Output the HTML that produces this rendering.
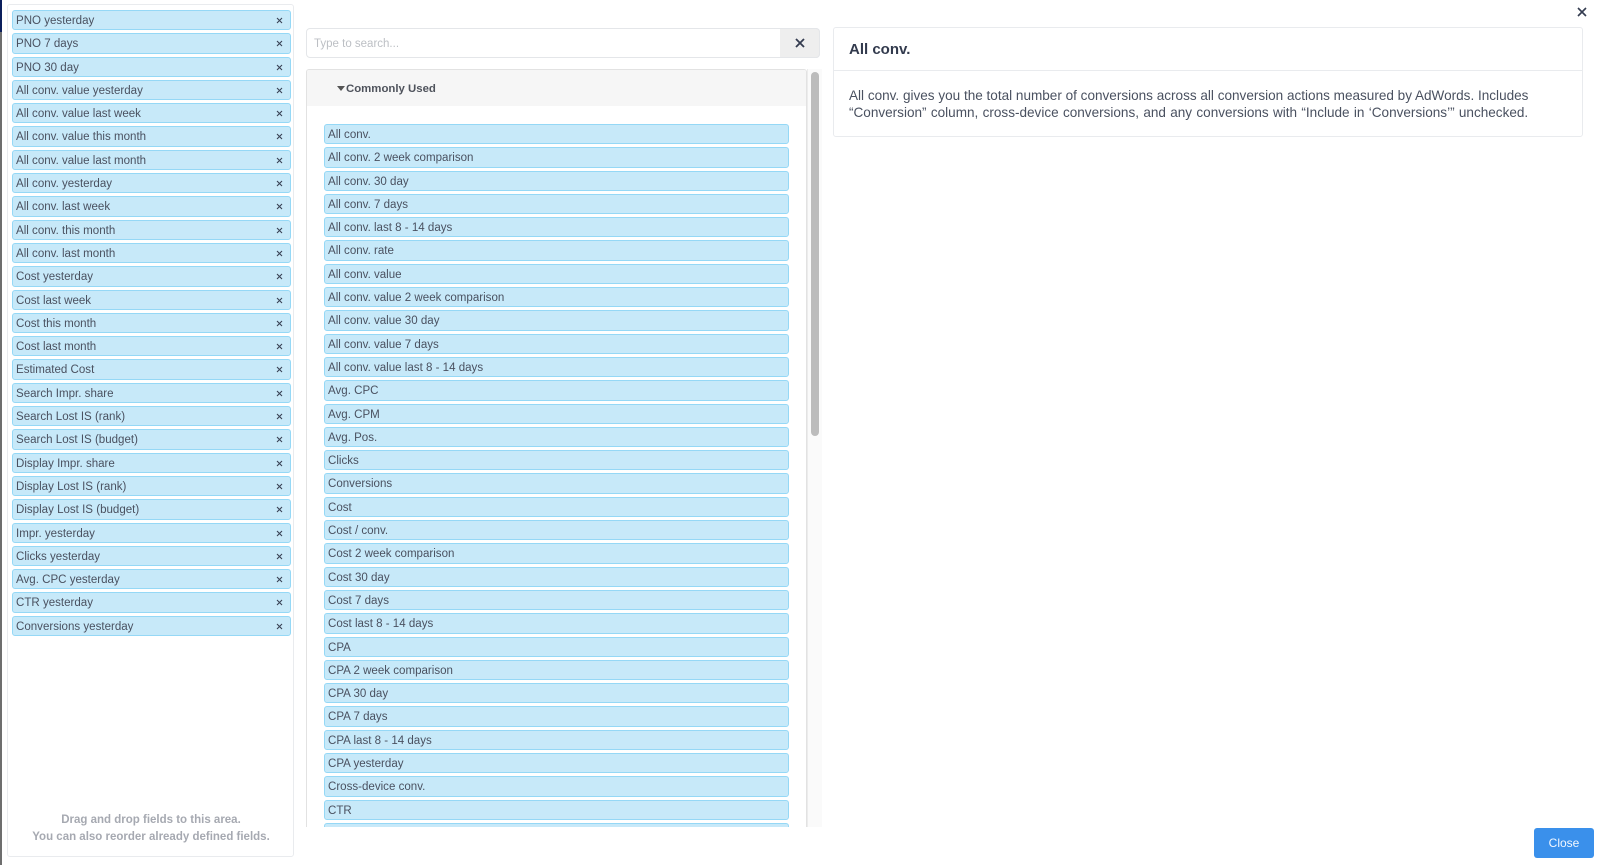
<!DOCTYPE html>
<html><head><meta charset="utf-8"><style>
html,body{margin:0;padding:0;width:1600px;height:865px;overflow:hidden;background:#fff;font-family:"Liberation Sans",sans-serif;color:#4a5160}
#w{position:absolute;left:0;top:0;width:1600px;height:865px;filter:blur(.3px)}
.a{position:absolute;box-sizing:border-box}
.t{height:20.3px;margin-bottom:3px;background:#c7e9f9;border:1px solid #95d8f6;border-radius:3px;font-size:11.55px;line-height:20.5px;padding-left:3px;white-space:nowrap;position:relative;box-sizing:border-box}
.t svg{position:absolute;right:7px;top:6px}
</style></head><body><div id="w">
<div class="a" style="left:0;top:0;width:2px;height:32px;background:#0b1f5c"></div>
<div class="a" style="left:0;top:32px;width:2px;height:833px;background:#6e6e6e"></div>

<div class="a" style="left:7px;top:4px;width:287px;height:853px;border:1px solid #e9ebee;border-radius:3px"></div>
<div class="a" style="left:12px;top:10px;width:279px" id="L">
<div class="t">PNO yesterday<svg width="7" height="7" viewBox="0 0 7 7"><path d="M1 1L6 6M6 1L1 6" stroke="#3a4256" stroke-width="1.1"/></svg></div>
<div class="t">PNO 7 days<svg width="7" height="7" viewBox="0 0 7 7"><path d="M1 1L6 6M6 1L1 6" stroke="#3a4256" stroke-width="1.1"/></svg></div>
<div class="t">PNO 30 day<svg width="7" height="7" viewBox="0 0 7 7"><path d="M1 1L6 6M6 1L1 6" stroke="#3a4256" stroke-width="1.1"/></svg></div>
<div class="t">All conv. value yesterday<svg width="7" height="7" viewBox="0 0 7 7"><path d="M1 1L6 6M6 1L1 6" stroke="#3a4256" stroke-width="1.1"/></svg></div>
<div class="t">All conv. value last week<svg width="7" height="7" viewBox="0 0 7 7"><path d="M1 1L6 6M6 1L1 6" stroke="#3a4256" stroke-width="1.1"/></svg></div>
<div class="t">All conv. value this month<svg width="7" height="7" viewBox="0 0 7 7"><path d="M1 1L6 6M6 1L1 6" stroke="#3a4256" stroke-width="1.1"/></svg></div>
<div class="t">All conv. value last month<svg width="7" height="7" viewBox="0 0 7 7"><path d="M1 1L6 6M6 1L1 6" stroke="#3a4256" stroke-width="1.1"/></svg></div>
<div class="t">All conv. yesterday<svg width="7" height="7" viewBox="0 0 7 7"><path d="M1 1L6 6M6 1L1 6" stroke="#3a4256" stroke-width="1.1"/></svg></div>
<div class="t">All conv. last week<svg width="7" height="7" viewBox="0 0 7 7"><path d="M1 1L6 6M6 1L1 6" stroke="#3a4256" stroke-width="1.1"/></svg></div>
<div class="t">All conv. this month<svg width="7" height="7" viewBox="0 0 7 7"><path d="M1 1L6 6M6 1L1 6" stroke="#3a4256" stroke-width="1.1"/></svg></div>
<div class="t">All conv. last month<svg width="7" height="7" viewBox="0 0 7 7"><path d="M1 1L6 6M6 1L1 6" stroke="#3a4256" stroke-width="1.1"/></svg></div>
<div class="t">Cost yesterday<svg width="7" height="7" viewBox="0 0 7 7"><path d="M1 1L6 6M6 1L1 6" stroke="#3a4256" stroke-width="1.1"/></svg></div>
<div class="t">Cost last week<svg width="7" height="7" viewBox="0 0 7 7"><path d="M1 1L6 6M6 1L1 6" stroke="#3a4256" stroke-width="1.1"/></svg></div>
<div class="t">Cost this month<svg width="7" height="7" viewBox="0 0 7 7"><path d="M1 1L6 6M6 1L1 6" stroke="#3a4256" stroke-width="1.1"/></svg></div>
<div class="t">Cost last month<svg width="7" height="7" viewBox="0 0 7 7"><path d="M1 1L6 6M6 1L1 6" stroke="#3a4256" stroke-width="1.1"/></svg></div>
<div class="t">Estimated Cost<svg width="7" height="7" viewBox="0 0 7 7"><path d="M1 1L6 6M6 1L1 6" stroke="#3a4256" stroke-width="1.1"/></svg></div>
<div class="t">Search Impr. share<svg width="7" height="7" viewBox="0 0 7 7"><path d="M1 1L6 6M6 1L1 6" stroke="#3a4256" stroke-width="1.1"/></svg></div>
<div class="t">Search Lost IS (rank)<svg width="7" height="7" viewBox="0 0 7 7"><path d="M1 1L6 6M6 1L1 6" stroke="#3a4256" stroke-width="1.1"/></svg></div>
<div class="t">Search Lost IS (budget)<svg width="7" height="7" viewBox="0 0 7 7"><path d="M1 1L6 6M6 1L1 6" stroke="#3a4256" stroke-width="1.1"/></svg></div>
<div class="t">Display Impr. share<svg width="7" height="7" viewBox="0 0 7 7"><path d="M1 1L6 6M6 1L1 6" stroke="#3a4256" stroke-width="1.1"/></svg></div>
<div class="t">Display Lost IS (rank)<svg width="7" height="7" viewBox="0 0 7 7"><path d="M1 1L6 6M6 1L1 6" stroke="#3a4256" stroke-width="1.1"/></svg></div>
<div class="t">Display Lost IS (budget)<svg width="7" height="7" viewBox="0 0 7 7"><path d="M1 1L6 6M6 1L1 6" stroke="#3a4256" stroke-width="1.1"/></svg></div>
<div class="t">Impr. yesterday<svg width="7" height="7" viewBox="0 0 7 7"><path d="M1 1L6 6M6 1L1 6" stroke="#3a4256" stroke-width="1.1"/></svg></div>
<div class="t">Clicks yesterday<svg width="7" height="7" viewBox="0 0 7 7"><path d="M1 1L6 6M6 1L1 6" stroke="#3a4256" stroke-width="1.1"/></svg></div>
<div class="t">Avg. CPC yesterday<svg width="7" height="7" viewBox="0 0 7 7"><path d="M1 1L6 6M6 1L1 6" stroke="#3a4256" stroke-width="1.1"/></svg></div>
<div class="t">CTR yesterday<svg width="7" height="7" viewBox="0 0 7 7"><path d="M1 1L6 6M6 1L1 6" stroke="#3a4256" stroke-width="1.1"/></svg></div>
<div class="t">Conversions yesterday<svg width="7" height="7" viewBox="0 0 7 7"><path d="M1 1L6 6M6 1L1 6" stroke="#3a4256" stroke-width="1.1"/></svg></div>
</div>
<div class="a" style="left:8px;top:811.5px;width:286px;text-align:center;font-size:11.5px;font-weight:bold;line-height:17.6px;color:#a6a9b1">Drag and drop fields to this area.<br>You can also reorder already defined fields.</div>

<div class="a" style="left:306px;top:28px;width:514px;height:30px;border:1px solid #e4e6e9;border-radius:4px;font-size:11.5px;line-height:30px;padding-left:7px;color:#bcbfc4">Type to search...</div>
<div class="a" style="left:780px;top:28px;width:40px;height:30px;background:#eeeeee;border:1px solid #e4e6e9;border-left:0;border-radius:0 4px 4px 0"></div>
<svg class="a" style="left:794px;top:37px" width="12" height="12" viewBox="0 0 12 12"><path d="M2 2L10 10M10 2L2 10" stroke="#343c50" stroke-width="1.8"/></svg>

<div class="a" style="left:306px;top:69px;width:501px;height:758px;border:1px solid #e2e2e2;border-bottom:0;border-radius:3px 3px 0 0;overflow:hidden">
<div style="height:36px;background:#f6f6f6;position:relative">
<svg style="position:absolute;left:30px;top:16px" width="8" height="5" viewBox="0 0 8 5"><path d="M0 0H8L4 5Z" fill="#555"/></svg>
<div style="position:absolute;left:39px;top:11px;font-size:11.4px;font-weight:bold;line-height:16px;color:#4f535c">Commonly Used</div>
</div>
<div style="position:absolute;left:17px;top:54px;width:465px">
<div class="t">All conv.</div>
<div class="t">All conv. 2 week comparison</div>
<div class="t">All conv. 30 day</div>
<div class="t">All conv. 7 days</div>
<div class="t">All conv. last 8 - 14 days</div>
<div class="t">All conv. rate</div>
<div class="t">All conv. value</div>
<div class="t">All conv. value 2 week comparison</div>
<div class="t">All conv. value 30 day</div>
<div class="t">All conv. value 7 days</div>
<div class="t">All conv. value last 8 - 14 days</div>
<div class="t">Avg. CPC</div>
<div class="t">Avg. CPM</div>
<div class="t">Avg. Pos.</div>
<div class="t">Clicks</div>
<div class="t">Conversions</div>
<div class="t">Cost</div>
<div class="t">Cost / conv.</div>
<div class="t">Cost 2 week comparison</div>
<div class="t">Cost 30 day</div>
<div class="t">Cost 7 days</div>
<div class="t">Cost last 8 - 14 days</div>
<div class="t">CPA</div>
<div class="t">CPA 2 week comparison</div>
<div class="t">CPA 30 day</div>
<div class="t">CPA 7 days</div>
<div class="t">CPA last 8 - 14 days</div>
<div class="t">CPA yesterday</div>
<div class="t">Cross-device conv.</div>
<div class="t">CTR</div>
<div class="t"></div>
</div>
</div>
<div class="a" style="left:807px;top:69px;width:15px;height:758px;background:#fafafa;border-left:1px solid #ececec"></div>
<div class="a" style="left:811px;top:72px;width:8px;height:364px;background:#bcbcbc;border-radius:4px"></div>

<div class="a" style="left:833px;top:27px;width:750px;height:110px;border:1px solid #e9ebee;border-radius:3px">
<div style="height:42px;border-bottom:1px solid #e9ebee;box-sizing:content-box;padding-left:15px;font-size:15px;font-weight:bold;line-height:43px;color:#323a4d">All conv.</div>
<div style="padding:16px 15px 0;font-size:13.55px;line-height:17.3px;color:#4a5160;white-space:nowrap">All conv. gives you the total number of conversions across all conversion actions measured by AdWords. Includes<br><span style="word-spacing:.55px">“Conversion” column, cross-device conversions, and any conversions with “Include in ‘Conversions’” unchecked.</span></div>
</div>

<svg class="a" style="left:1577px;top:7px" width="10" height="10" viewBox="0 0 10 10"><path d="M1 1L9 9M9 1L1 9" stroke="#343c50" stroke-width="1.6"/></svg>
<div class="a" style="left:1534px;top:828px;width:60px;height:30px;background:#3a90eb;border-radius:3px;color:#f2f8ff;font-size:12px;line-height:30px;text-align:center">Close</div>
</div></body></html>
